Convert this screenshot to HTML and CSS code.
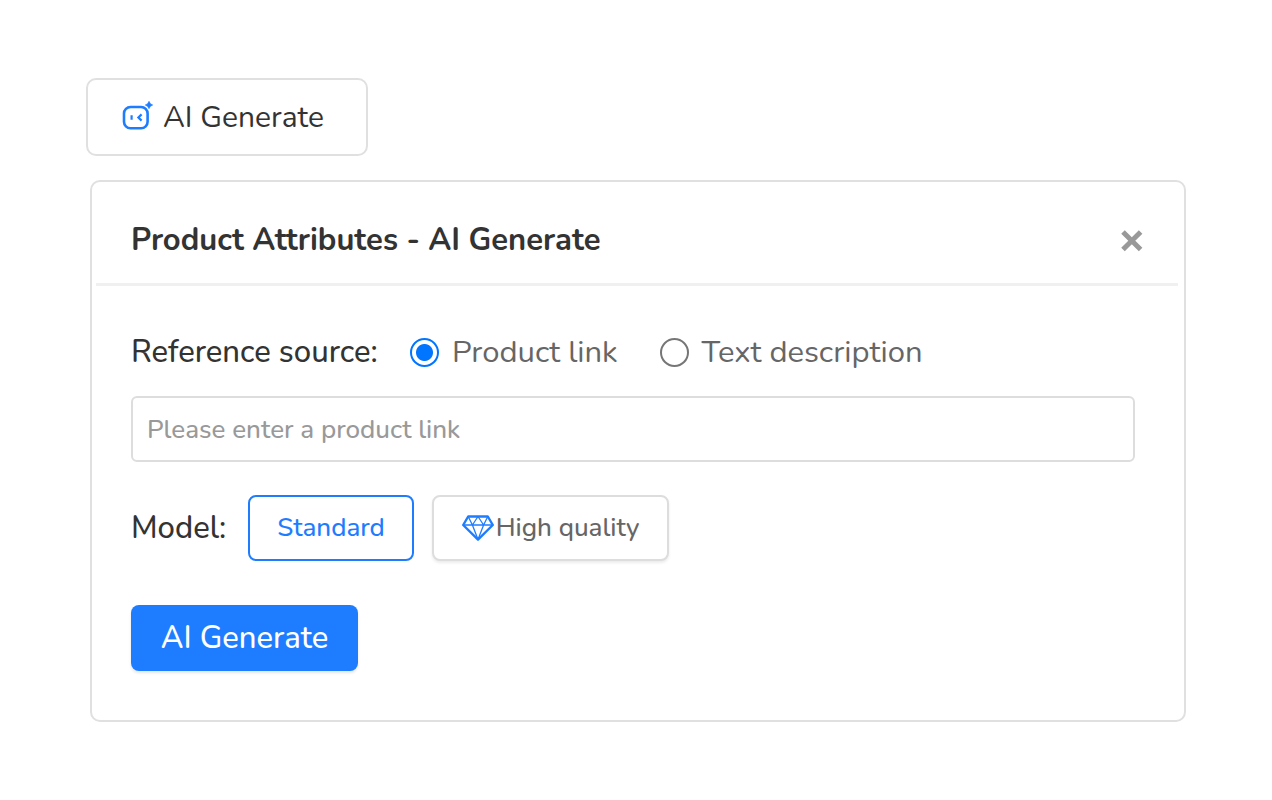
FILE: index.html
```html
<!DOCTYPE html>
<html lang="en">
<head>
<meta charset="utf-8">
<meta name="viewport" content="width=device-width, initial-scale=1">
<title>Product Attributes - AI Generate</title>
<link rel="stylesheet" href="styles.css">
</head>
<body>
<main class="page">
  <button type="button" class="trigger">
    <svg class="trigger-icon" viewBox="0 0 32 34" fill="none" aria-hidden="true">
      <rect x="3" y="6" width="23.6" height="21.2" rx="6.5" stroke="currentColor" stroke-width="2.6"/>
      <path d="M10.6 14.2v4.6M20.6 13.4l-3.2 3.1 3.2 3.1" stroke="currentColor" stroke-width="2.2"/>
      <path d="M28 .4Q28.8 3.2 31.6 4Q28.8 4.8 28 7.6Q27.2 4.8 24.4 4Q27.2 3.2 28 .4Z" fill="currentColor" stroke="currentColor" stroke-width=".8"/>
    </svg>
    <span>AI Generate</span>
  </button>

  <section class="panel" aria-labelledby="panel-title">
    <header class="panel-header">
      <h1 class="panel-title" id="panel-title">Product Attributes - AI Generate</h1>
      <button type="button" class="close" aria-label="Close">
        <svg class="close-icon" viewBox="0 0 22 24" aria-hidden="true"><path d="M2 4L19.6 21.6M19.6 4L2 21.6" stroke="currentColor" stroke-width="5"/></svg>
      </button>
    </header>
    <form class="panel-body">
      <div class="source" role="radiogroup" aria-labelledby="source-label">
        <span class="label source-label" id="source-label">Reference source:</span>
        <label class="option"><input class="radio" type="radio" name="source" checked><span>Product link</span></label>
        <label class="option"><input class="radio" type="radio" name="source"><span>Text description</span></label>
      </div>
      <input class="link-input" type="text" placeholder="Please enter a product link" aria-label="Product link">
      <div class="models" role="group" aria-labelledby="model-label">
        <span class="label model-label" id="model-label">Model:</span>
        <button type="button" class="model model-active" aria-pressed="true">Standard</button>
        <button type="button" class="model model-high" aria-pressed="false">
          <svg class="gem" viewBox="0 0 32 26" fill="none" stroke="currentColor" stroke-linejoin="round" aria-hidden="true">
            <path d="M6.2 1.5h19.6L30.8 10 16 24.6 1.2 10z" stroke-width="2.4"/>
            <path d="M1.2 10h29.6M6.2 1.5L10.4 10 16 1.5 21.6 10l4.2-8.5M10.4 10L16 24.6 21.6 10" stroke-width="1.3"/>
          </svg>
          <span>High quality</span>
        </button>
      </div>
      <button type="button" class="submit">AI Generate</button>
    </form>
  </section>
</main>
</body>
</html>
```
FILE: styles.css
```css
* { box-sizing: border-box; }

body {
  margin: 0;
  background: #fff;
  color: #333;
  font-family: Nunito, "Noto Sans", sans-serif;
  font-size: 31px;
  line-height: 40px;
}

button, input { font: inherit; margin: 0; }
button { cursor: pointer; }

.page { padding: 78px 86px; }

.trigger {
  display: flex;
  align-items: center;
  gap: 10px;
  min-width: 282px;
  height: 78px;
  padding: 2px 33px 0;
  border: 2px solid #e0e0e0;
  border-radius: 10px;
  background: #fff;
  color: #333;
  font-size: 30px;
}
.trigger-icon {
  flex: none;
  width: 32px;
  height: 34px;
  color: #1e7dff;
}

.panel {
  margin: 24px 0 0 4px;
  padding-bottom: 49px;
  border: 2px solid #e0e0e0;
  border-radius: 10px;
}
.panel-header {
  display: flex;
  align-items: center;
  justify-content: space-between;
  margin: 0 6px 0 4px;
  padding: 38px 35px 23px;
  border-bottom: 3px solid #f0f0f0;
}
.panel-title {
  margin: 0;
  font-size: 31px;
  line-height: 40px;
  font-weight: 700;
}
.close {
  display: flex;
  padding: 0;
  border: 0;
  background: none;
  color: #999;
}
.close-icon { width: 22px; height: 24px; }

.panel-body { padding: 46px 49px 0 39px; }

.source {
  display: flex;
  align-items: center;
}
.label { font-weight: 500; }
.source-label { width: 279px; }
.option {
  display: flex;
  align-items: center;
  gap: 13px;
  margin-right: 42px;
  color: #666;
}
.radio {
  appearance: none;
  width: 29px;
  height: 29px;
  border: 2px solid #767676;
  border-radius: 50%;
}
.radio:checked {
  border-color: #0075ff;
  background: radial-gradient(circle, #0075ff 8px, transparent 9px);
}

.link-input {
  display: block;
  width: 100%;
  height: 66px;
  margin-top: 24px;
  padding: 0 14px;
  border: 2px solid #ddd;
  border-radius: 6px;
  color: #333;
  font-size: 26px;
  font-weight: 500;
}
.link-input::placeholder { color: #999; opacity: 1; }

.models {
  display: flex;
  align-items: center;
  margin-top: 33px;
}
.model-label { width: 117px; }
.model {
  display: flex;
  align-items: center;
  justify-content: center;
  height: 66px;
  min-width: 166px;
  margin-right: 18px;
  border: 2px solid #ddd;
  border-radius: 8px;
  background: #fff;
  color: #666;
  font-size: 26px;
  font-weight: 500;
}
.model-active { border-color: #1e7dff; color: #1e7dff; }
.model-high {
  min-width: 237px;
  gap: 2px;
  box-shadow: 0 2px 3px rgba(0, 0, 0, .08);
}
.gem {
  width: 32px;
  height: 26px;
  color: #1e7dff;
}

.submit {
  display: block;
  min-width: 227px;
  height: 66px;
  margin-top: 44px;
  border: 0;
  border-radius: 8px;
  background: #1e7dff;
  color: #fff;
  font-weight: 500;
  box-shadow: 0 2px 3px rgba(0, 0, 0, .1);
}
```
